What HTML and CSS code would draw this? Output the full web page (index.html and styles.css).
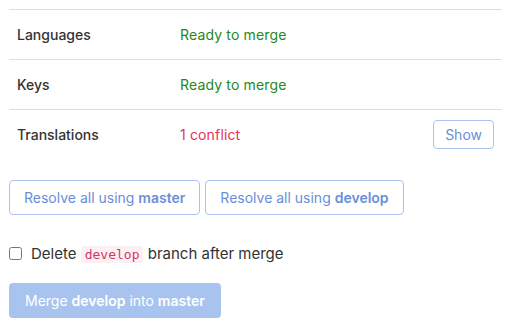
FILE: index.html
```html
<!DOCTYPE html>
<html lang="en">
<head>
    <meta charset="UTF-8">
    <meta name="viewport" content="width=device-width, initial-scale=1.0">
    <title>Merge branches</title>
    <link rel="stylesheet" href="styles.css">
</head>
<body>
    <div class="merge-panel">
        <table class="merge-table">
            <tr>
                <td class="name">Languages</td>
                <td class="status ok">Ready to merge</td>
                <td class="action"></td>
            </tr>
            <tr>
                <td class="name">Keys</td>
                <td class="status ok">Ready to merge</td>
                <td class="action"></td>
            </tr>
            <tr>
                <td class="name">Translations</td>
                <td class="status conflict">1 conflict</td>
                <td class="action"><button class="btn btn-outline btn-sm">Show</button></td>
            </tr>
        </table>

        <div class="resolve-buttons">
            <button class="btn btn-outline">Resolve all using <b>master</b></button>
            <button class="btn btn-outline">Resolve all using <b>develop</b></button>
        </div>

        <label class="delete-branch">
            <input type="checkbox">
            <span>Delete <code>develop</code> branch after merge</span>
        </label>

        <button class="btn btn-primary" disabled>Merge <b>develop</b> into <b>master</b></button>
    </div>
</body>
</html>
```

FILE: styles.css
```css
body {
    margin: 0;
    font-family: Inter, "Open Sans", Arial, sans-serif;
    font-size: 14px;
    color: #333;
    background: #fff;
}
.merge-panel {
    padding: 9px 4px 0 9px;
}
.merge-table {
    width: 100%;
    border-collapse: collapse;
}
.merge-table td {
    height: 49px;
    border-top: 1px solid #dedede;
    padding: 0;
    vertical-align: middle;
}
.merge-table .name {
    width: 163px;
    padding-left: 8px;
    font-weight: 500;
    color: #333;
}
.status {
    letter-spacing: 0.15px;
}
.status.ok {
    color: #1e8a1e;
}
.status.conflict {
    color: #e63060;
}
.action {
    text-align: right;
    padding-right: 8px !important;
}
.btn {
    font-family: inherit;
    font-size: 14px;
    border-radius: 4px;
    cursor: pointer;
    height: 35px;
    padding: 0 14px;
}
.btn b {
    font-weight: 600;
}
.btn-outline {
    background: #fff;
    color: #6a8fd8;
    border: 1px solid #a9c3f0;
}
.btn-sm {
    height: 29px;
    padding: 0 11px;
}
.resolve-buttons {
    display: flex;
    gap: 5px;
    margin-top: 21px;
}
.delete-branch {
    display: flex;
    align-items: center;
    margin-top: 29px;
    font-size: 15px;
    color: #333;
}
.delete-branch input {
    margin: 0 9px 0 0;
    width: 13px;
    height: 13px;
}
code {
    font-family: "DejaVu Sans Mono", monospace;
    font-size: 13px;
    color: #d6336c;
    background: #fbf1f3;
    border-radius: 3px;
    padding: 1px 4px;
}
.btn-primary {
    margin-top: 20px;
    background: #a8c4ee;
    color: #fff;
    border: none;
    padding: 0 16px;
}
```
